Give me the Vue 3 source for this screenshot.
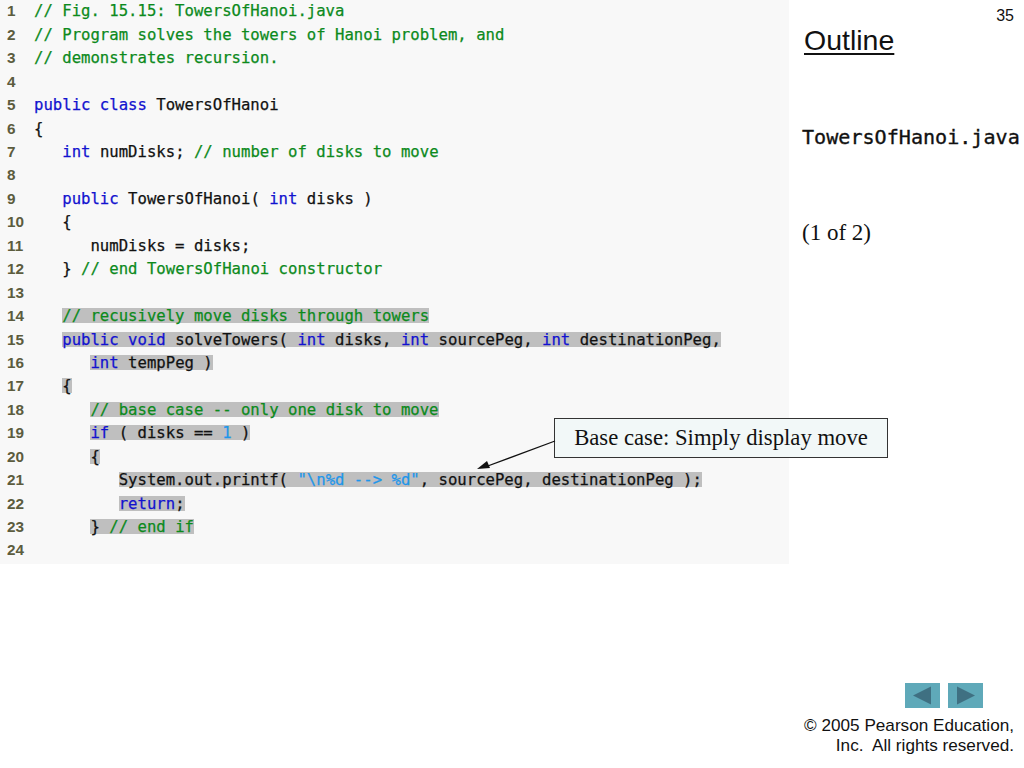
<script setup>
const k = 'kw', c = 'cm', t = 'tx', n = 'lit'
const lines = [
  { p: [[c, '// Fig. 15.15: TowersOfHanoi.java']] },
  { p: [[c, '// Program solves the towers of Hanoi problem, and']] },
  { p: [[c, '// demonstrates recursion.']] },
  { p: [] },
  { p: [[k, 'public class '], [t, 'TowersOfHanoi']] },
  { p: [[t, '{']] },
  { i: 3, p: [[k, 'int '], [t, 'numDisks; '], [c, '// number of disks to move']] },
  { p: [] },
  { i: 3, p: [[k, 'public '], [t, 'TowersOfHanoi( '], [k, 'int '], [t, 'disks )']] },
  { i: 3, p: [[t, '{']] },
  { i: 6, p: [[t, 'numDisks = disks;']] },
  { i: 3, p: [[t, '} '], [c, '// end TowersOfHanoi constructor']] },
  { p: [] },
  { i: 3, h: 1, p: [[c, '// recusively move disks through towers']] },
  { i: 3, h: 1, p: [[k, 'public void '], [t, 'solveTowers( '], [k, 'int '], [t, 'disks, '], [k, 'int '], [t, 'sourcePeg, '], [k, 'int '], [t, 'destinationPeg,']] },
  { i: 6, h: 1, p: [[k, 'int '], [t, 'tempPeg )']] },
  { i: 3, h: 1, p: [[t, '{']] },
  { i: 6, h: 1, p: [[c, '// base case -- only one disk to move']] },
  { i: 6, h: 1, p: [[k, 'if '], [t, '( disks == '], [n, '1'], [t, ' )']] },
  { i: 6, h: 1, p: [[t, '{']] },
  { i: 9, h: 1, p: [[t, 'System.out.printf( '], [n, '"\\n%d --> %d"'], [t, ', sourcePeg, destinationPeg );']] },
  { i: 9, h: 1, p: [[k, 'return'], [t, ';']] },
  { i: 6, h: 1, p: [[t, '} '], [c, '// end if']] },
  { p: [] },
]
</script>

<template>
  <div class="slide">
    <main class="code">
      <div v-for="(line, idx) in lines" :key="idx" class="row">
        <span class="num">{{ idx + 1 }}</span>
        <span class="src"><span class="indent">{{ ' '.repeat(line.i || 0) }}</span><span :class="{ hl: line.h }"><span v-for="(part, j) in line.p" :key="j" :class="part[0]">{{ part[1] }}</span></span></span>
      </div>
    </main>
    <aside class="side">
      <div class="page">35</div>
      <h1 class="title">Outline</h1>
      <div class="file">TowersOfHanoi.java</div>
      <div class="part">(1 of 2)</div>
      <div class="foot">
        <div class="nav">
          <svg width="35" height="25" viewBox="0 0 35 25"><rect width="35" height="25" fill="#5fa9b9" /><polygon points="8,12.5 26,3.5 26,21.5" fill="#3f7082" /></svg>
          <svg width="35" height="25" viewBox="0 0 35 25"><rect width="35" height="25" fill="#5fa9b9" /><polygon points="27,12.5 9,3.5 9,21.5" fill="#3f7082" /></svg>
        </div>
        <div class="copy">© 2005 Pearson Education,<br />Inc.&nbsp; All rights reserved.</div>
      </div>
    </aside>
    <div class="callout">Base case: Simply display move</div>
    <svg class="arrow" width="90" height="40" viewBox="0 0 90 40">
      <line x1="78" y1="11" x2="8" y2="37" stroke="#111" stroke-width="1.3" />
      <polygon points="0,39 10,31 13,38" fill="#111" />
    </svg>
  </div>
</template>

<style scoped>
.slide {
  position: relative;
  display: flex;
  align-items: flex-start;
  width: 1024px;
  height: 768px;
  background: #fff;
  overflow: hidden;
}
.code {
  width: 789px;
  height: 564px;
  flex: none;
  box-sizing: border-box;
  padding-top: 0.4px;
  background: #f8f8f8;
}
.row {
  display: flex;
  height: 23.45px;
  line-height: 22px;
}
.num {
  width: 34px;
  flex: none;
  padding-left: 7px;
  box-sizing: border-box;
  font: bold 15.3px/22px "Liberation Sans", sans-serif;
  color: #5c5c3e;
}
.src {
  font-family: "DejaVu Sans Mono", monospace;
  font-size: 15.63px;
  white-space: pre;
  -webkit-text-stroke: 0.25px currentColor;
}
.hl {
  display: inline-block;
  height: 15px;
  line-height: 15px;
  background: #bfbfbf;
}
.kw { color: #1212cf; }
.cm { color: #0c8a1c; }
.tx { color: #111; }
.lit { color: #1e96ea; }
.side {
  flex: none;
  width: 235px;
  height: 768px;
  display: flex;
  flex-direction: column;
  padding: 0 10px 0 13px;
  box-sizing: border-box;
}
.page {
  align-self: flex-end;
  margin-top: 8px;
  font: 16px/15px "Liberation Sans", sans-serif;
  color: #111;
}
.title {
  margin: 0 0 0 2px;
  font: 400 28.5px/34px "Liberation Sans", sans-serif;
  color: #111;
  text-decoration: underline;
  text-decoration-thickness: 2px;
  text-underline-offset: 3px;
}
.file {
  margin-top: 68px;
  font: 20.1px/24px "DejaVu Sans Mono", monospace;
  color: #111;
  white-space: nowrap;
  -webkit-text-stroke: 0.35px currentColor;
}
.part {
  margin-top: 72px;
  font: 23px/24px "Liberation Serif", serif;
  color: #111;
}
.foot {
  margin-top: auto;
  margin-bottom: 13px;
}
.nav {
  display: flex;
  justify-content: flex-end;
  gap: 8px;
  margin-right: 31px;
  margin-bottom: 7px;
}
.nav svg { display: block; }
.copy {
  font: 17.15px/20px "Liberation Sans", sans-serif;
  color: #111;
  text-align: right;
  white-space: nowrap;
}
.callout {
  position: absolute;
  left: 554px;
  top: 418px;
  width: 334px;
  height: 40px;
  box-sizing: border-box;
  border: 1px solid #333;
  background: #f2f8f8;
  text-align: center;
  font: 22.7px/38px "Liberation Serif", serif;
  color: #111;
}
.arrow {
  position: absolute;
  left: 477px;
  top: 430px;
}
</style>
